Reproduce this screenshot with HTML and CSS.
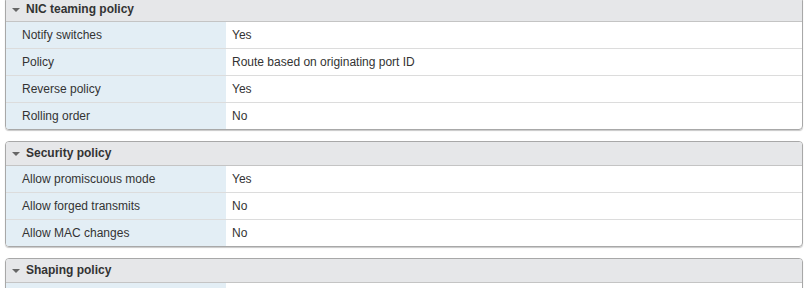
FILE: index.html
```html
<!DOCTYPE html>
<html lang="en">
<head>
  <meta charset="UTF-8">
  <title>Port group policies</title>
  <link rel="stylesheet" href="styles.css">
</head>
<body>
  <div class="stack">
    <section class="panel">
      <div class="panel-head"><span class="caret"></span>NIC teaming policy</div>
      <div class="row"><div class="label">Notify switches</div><div class="value">Yes</div></div>
      <div class="row"><div class="label">Policy</div><div class="value">Route based on originating port ID</div></div>
      <div class="row"><div class="label">Reverse policy</div><div class="value">Yes</div></div>
      <div class="row"><div class="label">Rolling order</div><div class="value">No</div></div>
    </section>
    <section class="panel">
      <div class="panel-head"><span class="caret"></span>Security policy</div>
      <div class="row"><div class="label">Allow promiscuous mode</div><div class="value">Yes</div></div>
      <div class="row"><div class="label">Allow forged transmits</div><div class="value">No</div></div>
      <div class="row"><div class="label">Allow MAC changes</div><div class="value">No</div></div>
    </section>
    <section class="panel">
      <div class="panel-head"><span class="caret"></span>Shaping policy</div>
      <div class="row"><div class="label"></div><div class="value"></div></div>
    </section>
  </div>
</body>
</html>
```
FILE: styles.css
```css
body {
  margin: 0;
  font-family: "Liberation Sans", Arial, sans-serif;
  font-size: 12px;
  color: #333;
  background: #fff;
  overflow: hidden;
}
.stack {
  display: flex;
  flex-direction: column;
  gap: 11px;
  padding: 0 3px 0 5px;
  margin-top: -3px;
}
.panel {
  border: 1px solid #a8a8a8;
  border-radius: 4px;
  overflow: hidden;
  box-shadow: 0 1px 1px #c8c8c8;
}
.panel-head {
  height: 23px;
  line-height: 23px;
  padding-left: 6px;
  background: #e6e7e9;
  border-bottom: 1px solid #c4c4c4;
  font-weight: bold;
  color: #333;
  display: flex;
  align-items: center;
}
.caret {
  width: 0;
  height: 0;
  border-left: 4px solid transparent;
  border-right: 4px solid transparent;
  border-top: 4px solid #666;
  margin-right: 6px;
  margin-top: 1px;
}
.row {
  display: grid;
  grid-template-columns: 220px 1fr;
  height: 26px;
  line-height: 26px;
  border-bottom: 1px solid #dcdcdc;
}
.row:last-child {
  border-bottom: none;
}
.label {
  background: #e3eef5;
  padding-left: 16px;
}
.value {
  padding-left: 6px;
}
```
